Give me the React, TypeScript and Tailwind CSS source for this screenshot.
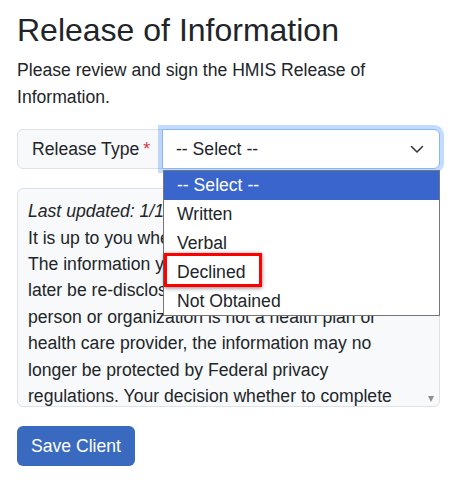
import React from "react";

const font = { fontFamily: '"Liberation Sans", Arial, sans-serif' };

const OPTIONS = ["-- Select --", "Written", "Verbal", "Declined", "Not Obtained"];

function ChevronDown() {
  return (
    <svg width="16" height="16" viewBox="0 0 16 16" fill="none">
      <path d="M2.5 5.5l5.5 5.5 5.5-5.5" stroke="#343a40" strokeWidth="1.6" strokeLinecap="round" strokeLinejoin="round" />
    </svg>
  );
}

export default function App() {
  return (
    <div
      className="relative w-[458px] h-[483px] bg-white pl-[17px] pr-[18px] pt-[11px] text-[#212529] overflow-hidden"
      style={font}
    >
      <h2 className="text-[32px] leading-[1.2] font-normal mb-[8px]">Release of Information</h2>
      <p className="text-[17.6px] leading-[1.5] mb-[19px]">
        Please review and sign the HMIS Release of Information.
      </p>

      {/* Release type input group */}
      <div className="relative flex h-[40px]">
        <div className="flex items-center px-[14px] bg-[#f8f9fa] border border-[#dee2e6] rounded-l-md text-[17.6px] leading-[1.5] whitespace-nowrap w-[146px]">
          Release Type<span className="text-[#dc3545] ml-1">*</span>
        </div>
        <div className="relative flex-1 flex items-center justify-between pl-[13px] pr-[14px] bg-white border border-[#86b7fe] rounded-r-md ring-4 ring-[#0d6efd]/25 -ml-px z-10">
          <span className="text-[17.6px] leading-[1.5]">-- Select --</span>
          <ChevronDown />
        </div>

        {/* Open native-style dropdown list */}
        <ul className="absolute left-[146px] right-0 top-[41px] z-20 bg-white border border-[#767676]">
          {OPTIONS.map((o, i) => (
            <li
              key={o}
              className={
                "h-[28.8px] flex items-center pl-[13px] text-[17.6px] " +
                (i === 0 ? "bg-[#3a65cc] text-white" : "text-[#212529]")
              }
            >
              {o}
            </li>
          ))}
        </ul>
      </div>

      {/* Release text */}
      <div className="relative mt-[19px] h-[219px] bg-[#f8f9fa] border border-[#dee2e6] rounded-md overflow-hidden">
        <div className="pl-[10px] pr-[24px] pt-[9px] text-[17.6px] leading-[1.5]">
          <em>Last updated: 1/1/2024</em>
          <br />
          It is up to you whether you sign this form.
          <br />
          The information you allow us to share may
          <br />
          later be re-disclosed by the recipient. If that
          <br />
          person or organization is not a health plan or health care provider, the information may no
          longer be protected by Federal privacy regulations. Your decision whether to complete this
          form will not affect your ability to receive services.
        </div>
        <div className="absolute right-[5px] bottom-[4px] w-0 h-0 border-l-[3.5px] border-r-[3.5px] border-t-[6px] border-l-transparent border-r-transparent border-t-[#8f8f8f]" />
      </div>

      <button className="mt-[19px] h-[40px] px-[14px] bg-[#3a6abf] text-white text-[17.6px] rounded-md">
        Save Client
      </button>

      {/* Highlight box around "Declined" */}
      <div className="absolute left-[164px] top-[253px] w-[98px] h-[34px] border-[3px] border-[#ff0000] shadow-[0_1px_4px_rgba(0,0,0,0.5)] z-30" />
    </div>
  );
}
